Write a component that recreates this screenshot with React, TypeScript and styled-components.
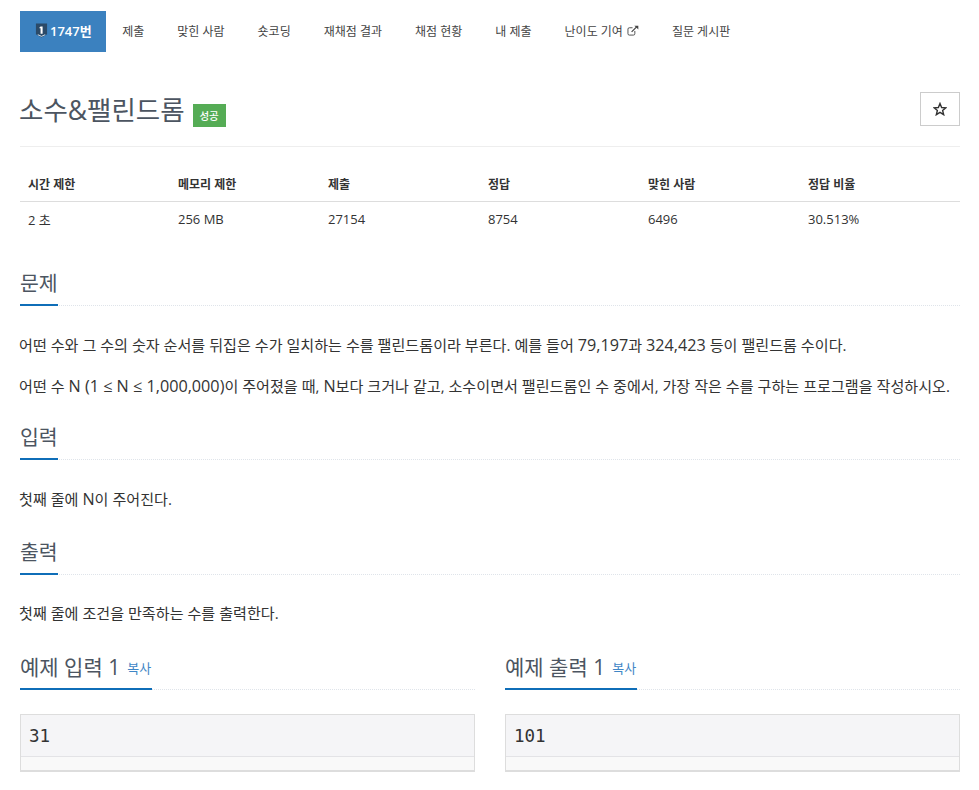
import React from "react";
import styled, { createGlobalStyle } from "styled-components";

const GlobalStyle = createGlobalStyle`
  html, body {
    margin: 0;
    padding: 0;
    background: #fff;
  }
  body {
    font-family: "Open Sans", "Noto Sans CJK KR", sans-serif;
    color: #333;
    overflow: hidden;
  }
  * {
    box-sizing: border-box;
  }
`;

const Page = styled.div`
  width: 979px;
  height: 790px;
  padding: 11px 19px 0 20px;
  overflow: hidden;
`;

const Tabs = styled.nav`
  display: flex;
  height: 41px;
`;

const Tab = styled.a<{ $active?: boolean }>`
  display: flex;
  align-items: center;
  gap: ${(p) => (p.$active ? "2px" : "4px")};
  padding: 0 ${(p) => (p.$active ? "14px 2px 15px" : "16.5px 2px")};
  font-size: ${(p) => (p.$active ? "13px" : "12px")};
  font-weight: ${(p) => (p.$active ? 600 : 400)};
  color: ${(p) => (p.$active ? "#fff" : "#444")};
  background: ${(p) => (p.$active ? "#3b81bf" : "transparent")};
  white-space: nowrap;
`;

const TitleRow = styled.div`
  display: flex;
  align-items: flex-start;
  justify-content: space-between;
  height: 95px;
  padding-top: 40px;
  border-bottom: 1px solid #eee;
`;

const TitleGroup = styled.div`
  display: flex;
  align-items: flex-end;
  gap: 8px;
`;

const Title = styled.h1`
  margin: 0 0 0 -1px;
  font-size: 26.5px;
  line-height: 36px;
  font-weight: 400;
  color: #4c5561;
`;

const Badge = styled.span`
  display: flex;
  align-items: center;
  justify-content: center;
  width: 33px;
  height: 23px;
  margin-bottom: 1px;
  font-size: 10.5px;
  font-weight: 500;
  color: #fff;
  background: #55ac55;
`;

const StarButton = styled.button`
  display: flex;
  align-items: center;
  justify-content: center;
  width: 40px;
  height: 34px;
  padding: 0;
  background: #fff;
  border: 1px solid #ccc;
`;

const InfoTable = styled.div`
  margin-top: 19px;
`;

const InfoRow = styled.div<{ $head?: boolean }>`
  display: grid;
  grid-template-columns: 150px 150px 160px 160px 160px 160px;
  height: ${(p) => (p.$head ? "36px" : "34px")};
  align-items: center;
  font-size: ${(p) => (p.$head ? "12px" : "13px")};
  font-weight: ${(p) => (p.$head ? 700 : 400)};
  color: #333;
  border-bottom: ${(p) => (p.$head ? "1px solid #ddd" : "none")};
`;

const InfoCell = styled.div`
  padding-left: 8px;
`;

const SectionHead = styled.div<{ $top: number }>`
  margin-top: ${(p) => p.$top}px;
  height: 36px;
  border-bottom: 1px dotted #dfe4ea;
`;

const SectionTitle = styled.h2<{ $sample?: boolean }>`
  display: inline-flex;
  align-items: baseline;
  gap: 7px;
  height: 36px;
  margin: 0;
  padding-right: ${(p) => (p.$sample ? "1px" : "0")};
  font-size: ${(p) => (p.$sample ? "21px" : "20.5px")};
  line-height: 26px;
  font-weight: 400;
  color: #4c5561;
  border-bottom: 2px solid #0f6eb8;
  white-space: nowrap;
`;

const Copy = styled.a`
  font-size: 13px;
  color: #3f86c6;
  transform: translateY(-2px);
`;

const Para = styled.p<{ $top: number }>`
  margin: ${(p) => p.$top}px 0 0 -1px;
  font-size: 15.1px;
  line-height: 20px;
  color: #333;
  white-space: nowrap;
`;

// latin runs sit a little larger than the hangul around them
const Lat = styled.span`
  font-size: 16.2px;
`;

const Samples = styled.div`
  display: grid;
  grid-template-columns: 455px 455px;
  column-gap: 30px;
`;

const SampleBox = styled.div`
  margin-top: 24px;
  height: 58px;
  border: 1px solid #ddd;
  border-bottom-width: 2px;
  background: #f9f9f9;
`;

const SampleCode = styled.pre`
  margin: 0;
  height: 42px;
  padding: 0 8px;
  font-family: "DejaVu Sans Mono", monospace;
  font-size: 17.5px;
  line-height: 43px;
  color: #333;
  background: #f5f5f7;
  border-bottom: 1px solid #e3e3e6;
`;

const ShieldIcon = () => (
  <svg width="13" height="15" viewBox="0 0 14 15">
    <path d="M1 0h12v11.500L7 15 1 11.500z" fill="#2b4a68" />
    <path d="M3 12l4 1.800 4-1.800" fill="none" stroke="#dfe8f0" strokeWidth="1" />
    <path d="M6 3.200h2.200V11H6V5H4.800V4.200z" fill="#fff" />
  </svg>
);

const ExternalIcon = () => (
  <svg width="12" height="11" viewBox="0 0 13 12" fill="none" stroke="#444" strokeWidth="1">
    <path d="M8.500 6.500v3a1.500 1.500 0 0 1-1.500 1.500H2.500A1.500 1.500 0 0 1 1 9.500V4.500A1.500 1.500 0 0 1 2.500 3H6" />
    <path d="M5 7.500L11 1.500" strokeWidth="1.300" />
    <path d="M8 .7h4.300V5z" fill="#444" stroke="none" />
  </svg>
);

const StarIcon = () => (
  <svg width="14" height="14" viewBox="0 0 24 24" fill="none" stroke="#333" strokeWidth="2.400" strokeLinejoin="miter">
    <path d="M12 2.500l2.800 6.900 7.200.5-5.500 4.700 1.800 7.200L12 17.900l-6.300 3.900 1.800-7.200L2 9.900l7.200-.5z" />
  </svg>
);

const tabs = ["제출", "맞힌 사람", "숏코딩", "재채점 결과", "채점 현황", "내 제출"];
const heads = ["시간 제한", "메모리 제한", "제출", "정답", "맞힌 사람", "정답 비율"];
const values = ["2 초", "256 MB", "27154", "8754", "6496", "30.513%"];

export default function App() {
  return (
    <Page>
      <GlobalStyle />
      <Tabs>
        <Tab $active>
          <ShieldIcon />
          1747번
        </Tab>
        {tabs.map((t) => (
          <Tab key={t}>{t}</Tab>
        ))}
        <Tab>
          난이도 기여
          <ExternalIcon />
        </Tab>
        <Tab>질문 게시판</Tab>
      </Tabs>

      <TitleRow>
        <TitleGroup>
          <Title>소수&amp;팰린드롬</Title>
          <Badge>성공</Badge>
        </TitleGroup>
        <StarButton aria-label="즐겨찾기">
          <StarIcon />
        </StarButton>
      </TitleRow>

      <InfoTable>
        <InfoRow $head>
          {heads.map((h) => (
            <InfoCell key={h}>{h}</InfoCell>
          ))}
        </InfoRow>
        <InfoRow>
          {values.map((v) => (
            <InfoCell key={v}>{v}</InfoCell>
          ))}
        </InfoRow>
      </InfoTable>

      <SectionHead $top={34}>
        <SectionTitle>문제</SectionTitle>
      </SectionHead>
      <Para $top={29}>
        어떤 수와 그 수의 숫자 순서를 뒤집은 수가 일치하는 수를 팰린드롬이라 부른다. 예를 들어 <Lat>79,197</Lat>과 <Lat>324,423</Lat> 등이 팰린드롬 수이다.
      </Para>
      <Para $top={21}>
        어떤 수 <Lat>N (1 ≤ N ≤ 1,000,000)</Lat>이 주어졌을 때, <Lat>N</Lat>보다 크거나 같고, 소수이면서 팰린드롬인 수 중에서, 가장 작은 수를 구하는 프로그램을 작성하시오.
      </Para>

      <SectionHead $top={28}>
        <SectionTitle>입력</SectionTitle>
      </SectionHead>
      <Para $top={29}>
        첫째 줄에 <Lat>N</Lat>이 주어진다.
      </Para>

      <SectionHead $top={30}>
        <SectionTitle>출력</SectionTitle>
      </SectionHead>
      <Para $top={28}>첫째 줄에 조건을 만족하는 수를 출력한다.</Para>

      <Samples>
        <div>
          <SectionHead $top={31}>
            <SectionTitle $sample>
              예제 입력 1 <Copy>복사</Copy>
            </SectionTitle>
          </SectionHead>
          <SampleBox>
            <SampleCode>31</SampleCode>
          </SampleBox>
        </div>
        <div>
          <SectionHead $top={31}>
            <SectionTitle $sample>
              예제 출력 1 <Copy>복사</Copy>
            </SectionTitle>
          </SectionHead>
          <SampleBox>
            <SampleCode>101</SampleCode>
          </SampleBox>
        </div>
      </Samples>
    </Page>
  );
}
